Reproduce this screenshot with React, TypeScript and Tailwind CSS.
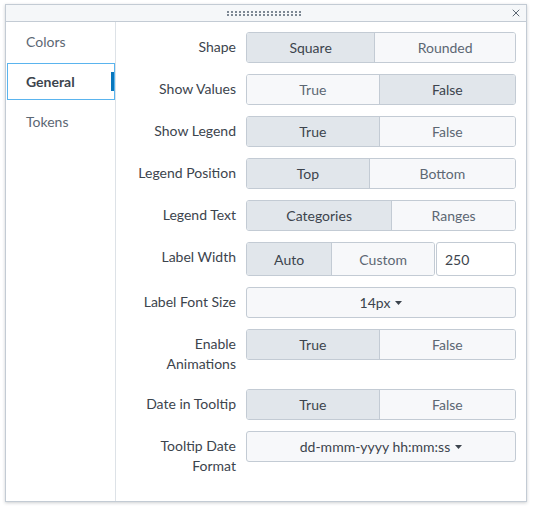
import { X } from "lucide-react";

type Seg = { label: string; on?: boolean };

const SegGroup = ({ items, tall }: { items: Seg[]; tall?: boolean }) => (
  <div
    className={`flex flex-1 rounded-[3px] border border-[#c3cbd4] overflow-hidden ${
      tall ? "h-[34px]" : "h-[31px]"
    }`}
  >
    {items.map((it, i) => (
      <button
        key={it.label}
        className={`flex-auto px-4 text-[14px] ${
          i > 0 ? "border-l border-[#c3cbd4]" : ""
        } ${it.on ? "bg-[#e1e6eb] text-[#3c444d]" : "bg-[#f7f8fa] text-[#5c6773]"}`}
      >
        {it.label}
      </button>
    ))}
  </div>
);

const Caret = () => (
  <svg width="7" height="4" viewBox="0 0 7 4" className="ml-[5px] inline-block">
    <path d="M0 0h7L3.5 4z" fill="#3c444d" />
  </svg>
);

const Select = ({ value }: { value: string }) => (
  <button className="flex flex-1 h-[31px] items-center justify-center rounded-[3px] border border-[#c3cbd4] bg-[#f7f8fa] text-[14px] text-[#3c444d]">
    {value}
    <Caret />
  </button>
);

const Row = ({ label, children }: { label: React.ReactNode; children: React.ReactNode }) => (
  <div className="flex items-start gap-[10px]">
    <div className="w-[110px] shrink-0 pt-[5px] pb-[4px] text-right text-[14px] leading-5 text-[#3c444d]">
      {label}
    </div>
    <div className="flex flex-1 gap-px">{children}</div>
  </div>
);

export default function App() {
  return (
    <div
      className="w-[534px] h-[510px] bg-white pt-[4px] pl-[5px]"
      style={{ fontFamily: "Lato, 'Liberation Sans', sans-serif" }}
    >
      <div className="w-[522px] h-[498px] flex flex-col border border-[#c3cbd4] bg-white shadow-[0_1px_3px_rgba(60,68,77,0.25)]">
        {/* header with drag handle */}
        <div className="flex h-[17px] shrink-0 items-center border-b border-[#c3cbd4] bg-[#f5f7f9]">
          <div className="flex-1" />
          <div className="grid grid-cols-[repeat(19,2px)] gap-x-[2px] gap-y-px pt-px">
            {Array.from({ length: 38 }).map((_, i) => (
              <span key={i} className="h-[2px] w-[2px] bg-[#7d8894]" />
            ))}
          </div>
          <div className="flex flex-1 justify-end pr-[4px]">
            <X size={12} strokeWidth={2} className="text-[#5c6773]" />
          </div>
        </div>

        <div className="flex flex-1">
          {/* sidebar */}
          <div className="w-[110px] shrink-0 border-r border-[#dde2e7] pt-px flex flex-col gap-[3px]">
            <div className="ml-px flex h-[37px] items-center pl-[19px] text-[14px] text-[#5c6773]">Colors</div>
            <div className="relative ml-px flex h-[37px] items-center border border-[#5ab4ee] pl-[18px] text-[14px] font-bold text-[#3c444d]">
              General
              <span className="absolute right-0 top-[8px] h-[19px] w-[3px] bg-[#0877bd]" />
            </div>
            <div className="ml-px flex h-[37px] items-center pl-[19px] text-[14px] text-[#5c6773]">Tokens</div>
          </div>

          {/* settings */}
          <div className="flex flex-1 flex-col gap-[11px] pl-[10px] pr-[10px] pt-[10px]">
            <Row label="Shape">
              <SegGroup items={[{ label: "Square", on: true }, { label: "Rounded" }]} />
            </Row>
            <Row label="Show Values">
              <SegGroup items={[{ label: "True" }, { label: "False", on: true }]} />
            </Row>
            <Row label="Show Legend">
              <SegGroup items={[{ label: "True", on: true }, { label: "False" }]} />
            </Row>
            <Row label="Legend Position">
              <SegGroup items={[{ label: "Top", on: true }, { label: "Bottom" }]} />
            </Row>
            <Row label="Legend Text">
              <SegGroup items={[{ label: "Categories", on: true }, { label: "Ranges" }]} />
            </Row>
            <Row label="Label Width">
              <SegGroup tall items={[{ label: "Auto", on: true }, { label: "Custom" }]} />
              <input
                defaultValue="250"
                className="h-[34px] w-[80px] shrink-0 rounded-[3px] border border-[#c3cbd4] bg-white pl-[8px] text-[14px] text-[#3c444d] outline-none"
              />
            </Row>
            <Row label="Label Font Size">
              <Select value="14px" />
            </Row>
            <Row
              label={
                <>
                  Enable
                  <br />
                  Animations
                </>
              }
            >
              <SegGroup items={[{ label: "True", on: true }, { label: "False" }]} />
            </Row>
            <Row label="Date in Tooltip">
              <SegGroup items={[{ label: "True", on: true }, { label: "False" }]} />
            </Row>
            <Row
              label={
                <>
                  Tooltip Date
                  <br />
                  Format
                </>
              }
            >
              <Select value="dd-mmm-yyyy hh:mm:ss" />
            </Row>
          </div>
        </div>
      </div>
    </div>
  );
}
